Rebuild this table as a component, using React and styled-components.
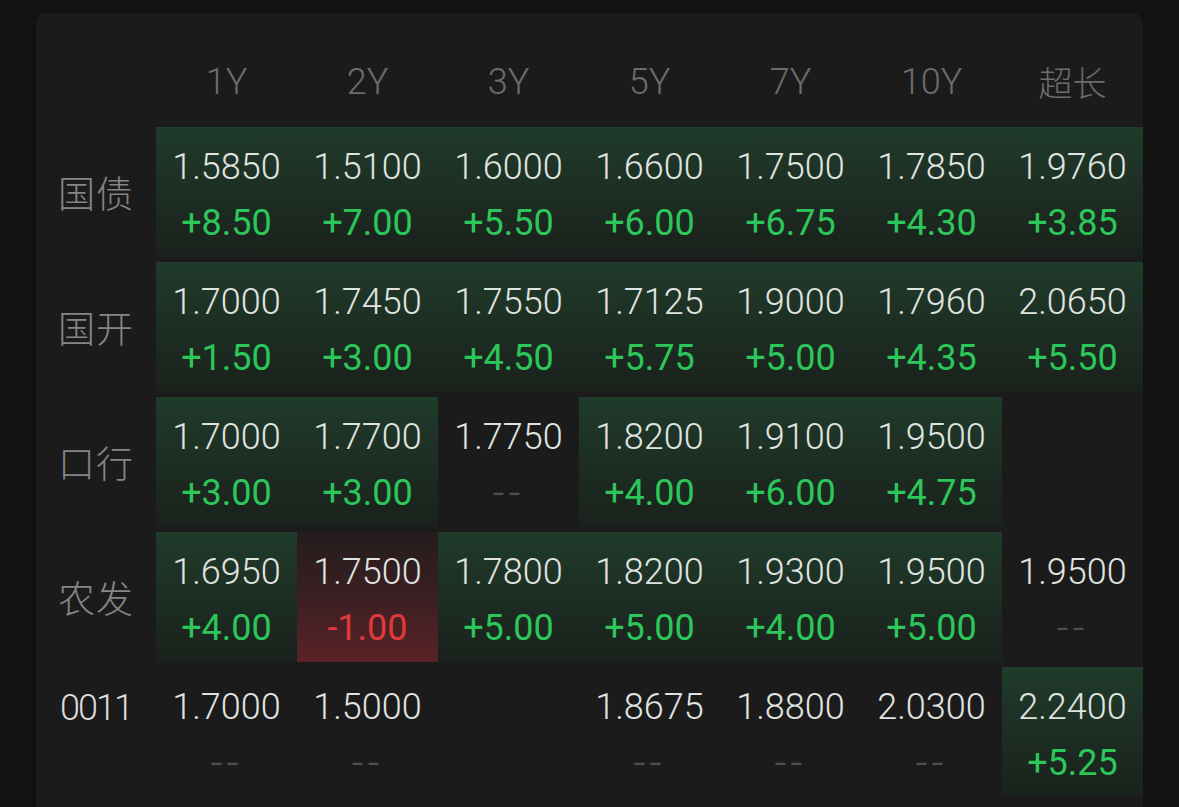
import React from 'react';
import styled, { createGlobalStyle, css } from 'styled-components';

const GlobalStyle = createGlobalStyle`
  html, body {
    margin: 0;
    padding: 0;
    background: #121212;
    height: 100%;
    overflow: hidden;
  }
  body {
    font-family: Roboto, "Noto Sans CJK SC", sans-serif;
    font-weight: 300;
  }
`;

const Page = styled.div`
  padding: 13px 0 0 36px;
`;

const Panel = styled.div`
  width: 1107px;
  background: #1b1b1b;
  border-radius: 10px 10px 0 0;
  display: grid;
  grid-template-columns: 120px repeat(7, 141px);
  grid-template-rows: 109px repeat(5, 130px);
  row-gap: 5px;
  padding-bottom: 20px;
`;

const HeadCell = styled.div`
  display: flex;
  align-items: flex-start;
  justify-content: center;
  padding-top: 49px;
  line-height: 40px;
  color: #6c6c6c;
  font-family: ${({ $cjk }) => ($cjk ? '"Noto Sans CJK SC", sans-serif' : 'Roboto, sans-serif')};
  font-size: ${({ $cjk }) => ($cjk ? '34px' : '36px')};
  font-weight: 300;
`;

const RowLabel = styled.div`
  display: flex;
  justify-content: center;
  align-items: ${({ $top }) => ($top ? 'flex-start' : 'center')};
  padding-top: ${({ $top }) => ($top ? '20px' : '0')};
  font-family: ${({ $top }) => ($top ? 'Roboto, sans-serif' : '"Noto Sans CJK SC", sans-serif')};
  font-size: ${({ $top }) => ($top ? '36px' : '37px')};
  font-weight: 300;
  letter-spacing: ${({ $top }) => ($top ? '-2px' : '1px')};
  color: ${({ $top }) => ($top ? '#dcdcdc' : '#858585')};
`;

const toneBg = {
  up: css`
    background: linear-gradient(180deg, #1f3b2a 0%, #1d2e23 50%, #1a211c 100%);
  `,
  down: css`
    background: linear-gradient(180deg, #251c1d 0%, #3b1f22 50%, #5a2327 100%);
  `,
  none: css`
    background: transparent;
  `,
};

const Cell = styled.div`
  display: flex;
  flex-direction: column;
  align-items: center;
  padding-top: 18px;
  ${({ $tone }) => toneBg[$tone || 'none']}
`;

const Yield = styled.div`
  font-size: 36px;
  line-height: 44px;
  color: #e0e4e1;
  margin-bottom: 12px;
`;

const Change = styled.div`
  font-size: 36px;
  line-height: 44px;
  font-weight: 400;
  color: ${({ $dir }) => ($dir === 'down' ? '#e0393c' : '#2cc65a')};
`;

const Dash = styled.div`
  font-size: 42px;
  line-height: 44px;
  letter-spacing: 4px;
  color: #4f4f4f;
`;

const terms = ['1Y', '2Y', '3Y', '5Y', '7Y', '10Y', '超长'];

const rows = [
  {
    label: '国债',
    cells: [
      ['1.5850', '+8.50', 'up'], ['1.5100', '+7.00', 'up'], ['1.6000', '+5.50', 'up'],
      ['1.6600', '+6.00', 'up'], ['1.7500', '+6.75', 'up'], ['1.7850', '+4.30', 'up'],
      ['1.9760', '+3.85', 'up'],
    ],
  },
  {
    label: '国开',
    cells: [
      ['1.7000', '+1.50', 'up'], ['1.7450', '+3.00', 'up'], ['1.7550', '+4.50', 'up'],
      ['1.7125', '+5.75', 'up'], ['1.9000', '+5.00', 'up'], ['1.7960', '+4.35', 'up'],
      ['2.0650', '+5.50', 'up'],
    ],
  },
  {
    label: '口行',
    cells: [
      ['1.7000', '+3.00', 'up'], ['1.7700', '+3.00', 'up'], ['1.7750', null, 'none'],
      ['1.8200', '+4.00', 'up'], ['1.9100', '+6.00', 'up'], ['1.9500', '+4.75', 'up'],
      null,
    ],
  },
  {
    label: '农发',
    cells: [
      ['1.6950', '+4.00', 'up'], ['1.7500', '-1.00', 'down'], ['1.7800', '+5.00', 'up'],
      ['1.8200', '+5.00', 'up'], ['1.9300', '+4.00', 'up'], ['1.9500', '+5.00', 'up'],
      ['1.9500', null, 'none'],
    ],
  },
  {
    label: '0011',
    top: true,
    cells: [
      ['1.7000', null, 'none'], ['1.5000', null, 'none'], null,
      ['1.8675', null, 'none'], ['1.8800', null, 'none'], ['2.0300', null, 'none'],
      ['2.2400', '+5.25', 'up'],
    ],
  },
];

export default function App() {
  return (
    <>
      <GlobalStyle />
      <Page>
        <Panel>
          <HeadCell />
          {terms.map((t) => (
            <HeadCell key={t} $cjk={t === '超长'}>{t}</HeadCell>
          ))}
          {rows.map((row) => (
            <React.Fragment key={row.label}>
              <RowLabel $top={row.top}>{row.label}</RowLabel>
              {row.cells.map((c, i) => {
                if (!c) return <Cell key={i} />;
                const [value, change, tone] = c;
                return (
                  <Cell key={i} $tone={tone}>
                    <Yield>{value}</Yield>
                    {change ? (
                      <Change $dir={tone}>{change}</Change>
                    ) : (
                      <Dash>--</Dash>
                    )}
                  </Cell>
                );
              })}
            </React.Fragment>
          ))}
        </Panel>
      </Page>
    </>
  );
}
